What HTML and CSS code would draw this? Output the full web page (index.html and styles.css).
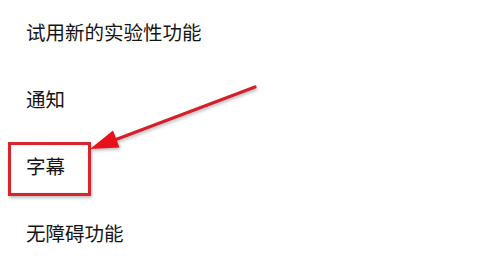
FILE: index.html
```html
<!DOCTYPE html>
<html lang="zh-CN">
<head>
    <meta charset="UTF-8">
    <meta name="viewport" content="width=device-width, initial-scale=1.0">
    <title>设置</title>
    <link rel="stylesheet" href="styles.css">
</head>
<body>
    <div class="screen">
        <ul class="menu">
            <li class="menu-item">试用新的实验性功能</li>
            <li class="menu-item">通知</li>
            <li class="menu-item highlight">字幕</li>
            <li class="menu-item">无障碍功能</li>
        </ul>

        <!-- annotation arrow over the list -->
        <svg class="arrow" width="480" height="258" viewBox="0 0 480 258">
            <line x1="255" y1="87" x2="112" y2="141" stroke="#d4202a" stroke-width="3.2" stroke-linecap="round" />
            <polygon points="90,149 113,130.5 119.5,147.5" fill="#e8121c" />
        </svg>
    </div>
</body>
</html>
```

FILE: styles.css
```css
/* General body styling */
body {
    margin: 0;
    padding: 0;
    background: #ffffff;
    font-family: "Noto Sans CJK SC", "Noto Sans", sans-serif;
    color: #151515;
}

.screen {
    position: relative;
    width: 480px;
    height: 258px;
    overflow: hidden;
}

/* Menu list */
.menu {
    list-style: none;
    margin: -2px 0 0 0;
    padding: 0 0 0 26px;
}

.menu-item {
    height: 67px;
    line-height: 67px;
    font-size: 19.5px;
}

/* Red annotation box */
.highlight {
    position: relative;
}

.highlight::before {
    content: "";
    position: absolute;
    left: -18px;
    top: 10px;
    width: 77px;
    height: 48px;
    border: 3px solid #d4262c;
    box-shadow: 1px 2px 3px rgba(0, 0, 0, 0.25), inset 0 0 1px rgba(120, 0, 0, 0.5);
}

.arrow {
    position: absolute;
    left: 0;
    top: 0;
    filter: drop-shadow(1px 2px 1.5px rgba(0, 0, 0, 0.25));
}
```
